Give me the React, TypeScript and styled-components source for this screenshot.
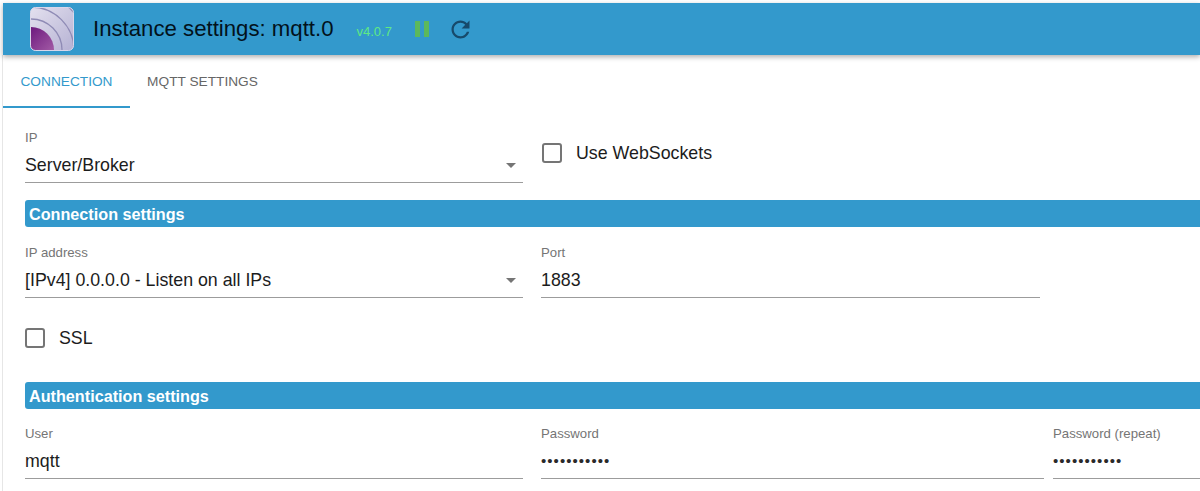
import React from "react";
import styled, { createGlobalStyle } from "styled-components";

const Global = createGlobalStyle`
  html, body { margin: 0; padding: 0; background: #fff; overflow: hidden; }
  body { font-family: "Liberation Sans", Arial, sans-serif; }
  * { box-sizing: border-box; }
`;

const Page = styled.div`
  width: 1200px;
  height: 491px;
  overflow: hidden;
  padding: 3px 0 0 3px;
  background: #fff;
  position: relative;
`;
const Rail = styled.div`
  position: absolute;
  left: 2px;
  top: 55px;
  bottom: 0;
  width: 1px;
  background: #e6e6e6;
`;
const Header = styled.header`
  height: 52px;
  background: #3399cc;
  display: flex;
  align-items: center;
  padding-left: 27px;
  box-shadow: 0 2px 5px rgba(0, 0, 0, 0.32);
  position: relative;
  z-index: 1;
`;
const Logo = styled.svg`
  width: 44px;
  height: 44px;
  flex: none;
`;
const Title = styled.h1`
  margin: 0 0 0 19px;
  font-size: 22.2px;
  font-weight: 400;
  color: #02121c;
  white-space: nowrap;
`;
const Version = styled.span`
  margin-left: 23px;
  font-size: 13px;
  color: #5fe884;
  position: relative;
  top: 2px;
`;
const Pause = styled.span`
  margin-left: 23px;
  width: 14px;
  height: 16px;
  display: flex;
  justify-content: space-between;
  &::before, &::after {
    content: "";
    width: 5px;
    background: #5cb85c;
  }
`;
const RefreshIcon = styled.svg`
  margin-left: 18px;
  width: 27px;
  height: 27px;
  fill: #174a6b;
  flex: none;
`;
const Tabs = styled.nav`
  height: 53px;
  display: flex;
`;
const Tab = styled.div<{ $active?: boolean }>`
  width: ${(p) => (p.$active ? "127px" : "145px")};
  padding-top: 2px;
  padding-bottom: ${(p) => (p.$active ? "0" : "2px")};
  display: flex;
  align-items: center;
  justify-content: center;
  font-size: 13.7px;
  color: ${(p) => (p.$active ? "#3399cc" : "#666")};
  border-bottom: ${(p) => (p.$active ? "2px solid #3399cc" : "none")};
  text-transform: uppercase;
`;
const Content = styled.main`
  padding: 23px 0 0 22px;
  display: flex;
  flex-direction: column;
`;
const Row = styled.div<{ $mt?: number }>`
  display: flex;
  gap: 18px;
  margin-top: ${(p) => p.$mt ?? 0}px;
`;
const Field = styled.div<{ $w: number; $ml?: number }>`
  width: ${(p) => p.$w}px;
  margin-left: ${(p) => p.$ml ?? 0}px;
  flex: none;
  height: 52px;
  display: flex;
  flex-direction: column;
  border-bottom: 1px solid #9c9c9c;
  position: relative;
`;
const Label = styled.label`
  font-size: 13.2px;
  line-height: 14px;
  color: #757575;
`;
const Value = styled.div`
  margin-top: 10px;
  font-size: 17.8px;
  line-height: 20px;
  color: #1c1c1c;
  white-space: nowrap;
`;
const Dots = styled.div`
  margin-top: 10px;
  font-size: 15px;
  letter-spacing: 1.05px;
  line-height: 20px;
  color: #2a2a2a;
  white-space: nowrap;
`;
const Arrow = styled.span`
  position: absolute;
  right: 7px;
  bottom: 14px;
  border-left: 5px solid transparent;
  border-right: 5px solid transparent;
  border-top: 5px solid #757575;
`;
const CheckRow = styled.div<{ $ml?: number; $mt?: number }>`
  display: flex;
  align-items: center;
  gap: 14px;
  height: 20px;
  margin-left: ${(p) => p.$ml ?? 0}px;
  margin-top: ${(p) => p.$mt ?? 0}px;
  font-size: 17.8px;
  color: #1c1c1c;
`;
const Box = styled.span`
  width: 20px;
  height: 20px;
  border: 2px solid #757575;
  border-radius: 3px;
  flex: none;
`;
const Section = styled.h2<{ $mt: number }>`
  margin: ${(p) => p.$mt}px 0 0 0;
  height: 27px;
  background: #3399cc;
  border-radius: 3px 0 0 3px;
  padding-left: 4px;
  font-size: 16.2px;
  line-height: 28px;
  font-weight: 700;
  color: #fff;
`;

function Select({ w, label, value }: { w: number; label: string; value: string }) {
  return (
    <Field $w={w}>
      <Label>{label}</Label>
      <Value>{value}</Value>
      <Arrow />
    </Field>
  );
}
function Text({ w, label, value }: { w: number; label: string; value: string }) {
  return (
    <Field $w={w}>
      <Label>{label}</Label>
      <Value>{value}</Value>
    </Field>
  );
}
function Secret({ w, ml, label }: { w: number; ml?: number; label: string }) {
  return (
    <Field $w={w} $ml={ml}>
      <Label>{label}</Label>
      <Dots>•••••••••••</Dots>
    </Field>
  );
}

export default function App() {
  return (
    <Page>
      <Global />
      <Rail />
      <Header>
        <Logo viewBox="0 0 44 44">
          <defs>
            <linearGradient id="bg" x1="0" y1="0" x2="1" y2="1">
              <stop offset="0" stopColor="#e4e1ef" />
              <stop offset="1" stopColor="#b5b1d3" />
            </linearGradient>
            <linearGradient id="pu" x1="0" y1="0" x2="1" y2="1">
              <stop offset="0" stopColor="#6d1a7e" />
              <stop offset="1" stopColor="#a25aa5" />
            </linearGradient>
            <clipPath id="cl"><rect x="0.5" y="0.5" width="43" height="43" rx="5" /></clipPath>
          </defs>
          <g clipPath="url(#cl)">
            <rect width="44" height="44" fill="url(#bg)" />
            <g fill="none" stroke="#8f8bb5" strokeWidth="1.3">
              <circle cx="1" cy="43" r="31" />
              <circle cx="1" cy="43" r="43" />
              <circle cx="1" cy="43" r="57" />
            </g>
            <path d="M1 20a23 23 0 0 1 23 23H1z" fill="url(#pu)" />
          </g>
          <rect x="0.5" y="0.5" width="43" height="43" rx="5" fill="none" stroke="#d9d7ea" />
        </Logo>
        <Title>Instance settings: mqtt.0</Title>
        <Version>v4.0.7</Version>
        <Pause />
        <RefreshIcon viewBox="0 0 24 24">
          <path d="M17.65 6.35C16.2 4.9 14.21 4 12 4c-4.42 0-7.99 3.58-7.99 8s3.57 8 7.99 8c3.73 0 6.84-2.55 7.73-6h-2.08c-.82 2.33-3.04 4-5.65 4-3.31 0-6-2.69-6-6s2.69-6 6-6c1.66 0 3.14.69 4.22 1.78L13 11h7V4l-2.35 2.35z" />
        </RefreshIcon>
      </Header>
      <Tabs>
        <Tab $active>Connection</Tab>
        <Tab>MQTT Settings</Tab>
      </Tabs>
      <Content>
        <Row>
          <Select w={498} label="IP" value="Server/Broker" />
          <CheckRow $ml={1} $mt={12}>
            <Box />
            Use WebSockets
          </CheckRow>
        </Row>
        <Section $mt={17}>Connection settings</Section>
        <Row $mt={19}>
          <Select w={498} label="IP address" value="[IPv4] 0.0.0.0 - Listen on all IPs" />
          <Text w={499} label="Port" value="1883" />
        </Row>
        <CheckRow $mt={30}>
          <Box />
          SSL
        </CheckRow>
        <Section $mt={34}>Authentication settings</Section>
        <Row $mt={18}>
          <Text w={498} label="User" value="mqtt" />
          <Secret w={503} label="Password" />
          <Secret w={147} ml={-9} label="Password (repeat)" />
        </Row>
      </Content>
    </Page>
  );
}
